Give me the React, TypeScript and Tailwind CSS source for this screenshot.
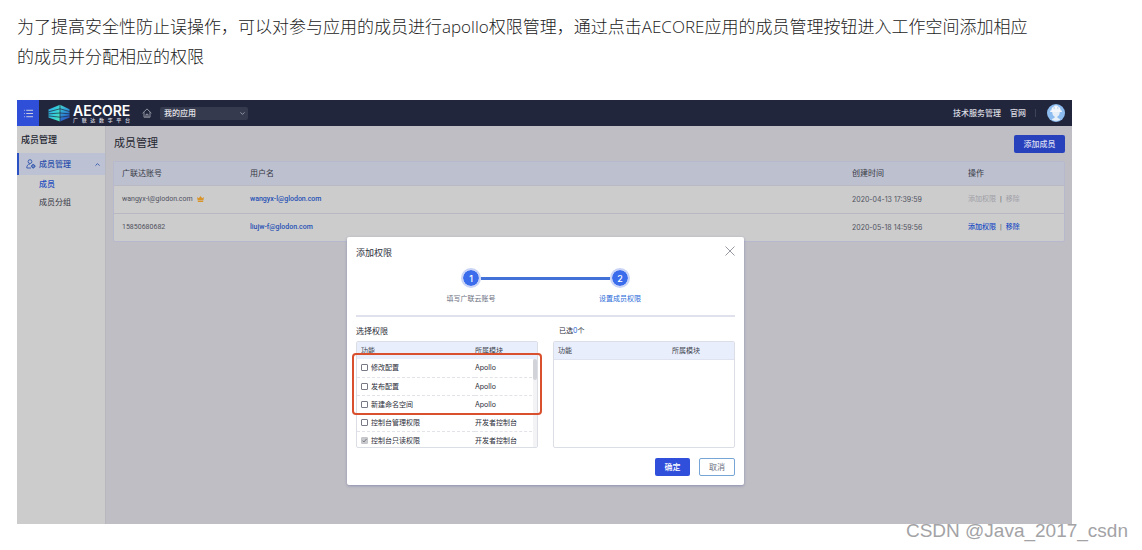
import React from "react";
import { ChevronDown, ChevronUp, List } from "lucide-react";

type Member = { account: string; name: string; created: string; owner: boolean };
type Permission = { id: string; name: string; module: string; granted: boolean };

const members: Member[] = [
  { account: "wangyx-l@glodon.com", name: "wangyx-l@glodon.com", created: "2020-04-13 17:39:59", owner: true },
  { account: "15850680682", name: "liujw-f@glodon.com", created: "2020-05-18 14:59:56", owner: false },
];

const permissions: Permission[] = [
  { id: "edit", name: "修改配置", module: "Apollo", granted: false },
  { id: "publish", name: "发布配置", module: "Apollo", granted: false },
  { id: "namespace", name: "新建命名空间", module: "Apollo", granted: false },
  { id: "console-admin", name: "控制台管理权限", module: "开发者控制台", granted: false },
  { id: "console-read", name: "控制台只读权限", module: "开发者控制台", granted: true },
];

function LogoMark() {
  return (
    <svg viewBox="0 0 22 18" className="h-[18px] w-[22px]" aria-hidden="true">
      <defs>
        <linearGradient id="mark" x1="0" y1="0" x2="1" y2="0.6">
          <stop offset="0" stopColor="#2f9fe0" />
          <stop offset="0.55" stopColor="#33c9dc" />
          <stop offset="1" stopColor="#45e0c4" />
        </linearGradient>
        <linearGradient id="side" x1="0" y1="0" x2="0.4" y2="1">
          <stop offset="0" stopColor="#46dcd2" />
          <stop offset="0.5" stopColor="#2f9bd8" />
          <stop offset="1" stopColor="#2b57c4" />
        </linearGradient>
      </defs>
      <path d="M0.5 5.6 12 0.8V17.4L0.5 13.6Z" fill="url(#mark)" />
      <path d="M12 0.8 21.5 5.2V13.4L12 17.4Z" fill="url(#side)" />
      <path
        d="M0.3 7.9 12 4.8 21.7 7.6M0.3 9.9 12 9 21.7 9.8M0.3 11.9 12 13.2 21.7 11.9M12 0.8V17.4"
        fill="none"
        stroke="#22263c"
        strokeWidth="0.7"
      />
    </svg>
  );
}

function HomeIcon() {
  return (
    <svg viewBox="0 0 10 10" className="size-[10px]" fill="none" stroke="#9da0ac" strokeWidth="0.9" aria-hidden="true">
      <path d="M0.6 5.2 5 0.9 9.4 5.2M2 4.2V9.2H8V4.2M4 9V6.3H6V9" />
    </svg>
  );
}

function Avatar() {
  return (
    <svg viewBox="0 0 18 18" className="size-[18px]" role="img" aria-label="用户">
      <circle cx="9" cy="9" r="9" fill="#8dbdf0" />
      <path d="M4.3 6.4C4.5 4 5.8 2.7 7.4 2.3V1.4H10.6V2.3C12.2 2.7 13.5 4 13.7 6.4H14.8V8H3.2V6.4Z" fill="#f3f7fb" />
      <path d="M5.2 8H12.8C12.8 10.8 11.4 12.2 10.4 12.6V13.8L13.4 15.2C11.4 17.4 6.6 17.4 4.6 15.2L7.6 13.8V12.6C6.6 12.2 5.2 10.8 5.2 8Z" fill="#e7eff8" />
      <path d="M7.2 2.8V5.2M10.8 2.8V5.2" stroke="#8dbdf0" strokeWidth="0.6" />
    </svg>
  );
}

function MemberIcon() {
  return (
    <svg viewBox="0 0 10 10" className="size-[10px]" fill="none" stroke="#3156ad" strokeWidth="0.9" aria-hidden="true">
      <circle cx="4" cy="2.6" r="1.9" />
      <path d="M5 9H0.8C0.8 6.7 1.8 5 4 5" />
      <circle cx="7.2" cy="7.2" r="1.6" fill="#3156ad" fillOpacity="0.5" />
      <path d="M7.2 4.9V5.6M7.2 8.8V9.5M4.9 7.2H5.6M8.8 7.2H9.5" />
    </svg>
  );
}

function CrownIcon() {
  return (
    <svg viewBox="0 0 7 6" className="mb-px h-[6px] w-[7px]" fill="#d99428" aria-hidden="true">
      <path d="M0 1 1.8 2.2 3.5 0 5.2 2.2 7 1 6.3 4.6H0.7ZM0.8 5H6.2V6H0.8Z" />
    </svg>
  );
}

function TopBar() {
  return (
    <header className="flex h-[26px] items-center bg-[#22263c] text-[8px] font-medium text-[#d9dae0]">
      <button aria-label="菜单" className="flex h-full w-[22px] items-center justify-center bg-[#304fd9]">
        <List className="size-[11px]" strokeWidth={2} />
      </button>
      <div className="ml-[9px] flex items-center gap-[3px]">
        <LogoMark />
        <div className="w-[57px]">
          <div className="font-[Inter] text-[14px] leading-[15px] font-semibold text-white">AECORE</div>
          <div className="flex justify-between text-[5px] leading-[5px]">
            {Array.from("广联达数字平台").map((c) => (
              <span key={c}>{c}</span>
            ))}
          </div>
        </div>
      </div>
      <a href="#home" aria-label="首页" className="ml-3">
        <HomeIcon />
      </a>
      <div className="relative ml-2">
        <select aria-label="应用" className="h-[13px] w-[88px] appearance-none rounded-xs bg-[#363a4e] pl-1 text-[8px] leading-[13px] font-medium text-[#e4e5ea]">
          <option>我的应用</option>
        </select>
        <ChevronDown className="pointer-events-none absolute top-[3px] right-[2px] size-[7px] text-[#a0a3b0]" strokeWidth={3} />
      </div>
      <nav className="ml-auto flex items-center gap-[9px]">
        <a href="#service">技术服务管理</a>
        <a href="#site">官网</a>
        <span className="h-2 w-px bg-[#3f435a]" />
      </nav>
      <div className="mr-[7px] ml-[11px]">
        <Avatar />
      </div>
    </header>
  );
}

function Sidebar() {
  return (
    <aside className="w-[89px] shrink-0 border-r border-[#b7b7c0] bg-[#cccccd] text-[8px]">
      <h2 className="flex h-[27px] items-center pl-1 text-[9px] font-medium text-[#22242f]">成员管理</h2>
      <button className="flex h-[22px] w-full items-center border-l-2 border-[#2a50c4] bg-[#bcc2d3] pr-1 pl-[7px] font-medium text-[#2c50ab]">
        <MemberIcon />
        <span className="ml-[3px]">成员管理</span>
        <ChevronUp className="ml-auto size-[7px]" strokeWidth={3} />
      </button>
      <nav className="flex flex-col pl-[22px] leading-[18px]">
        <a href="#members" className="font-medium text-[#1f4fc0]">成员</a>
        <a href="#groups" className="text-[#33353f]">成员分组</a>
      </nav>
    </aside>
  );
}

function MemberTable() {
  return (
    <table className="w-full table-fixed border-separate border-spacing-0 overflow-hidden rounded-xs border border-[#b6b9cd] bg-[#cccccd] text-left font-['Roboto','Noto_Sans_CJK_SC',sans-serif] text-[7px] text-[#50525d]">
      <thead>
        <tr className="h-[23px] bg-[#bdc0cf] text-[8px] text-[#353844]">
          <th className="w-32 pl-2 font-normal">广联达账号</th>
          <th className="pl-2 font-normal">用户名</th>
          <th className="w-[116px] pl-2 font-normal">创建时间</th>
          <th className="w-[104px] pl-2 font-normal">操作</th>
        </tr>
      </thead>
      <tbody>
        {members.map((m) => (
          <tr key={m.account} className="h-7 *:border-t *:border-[#b9b9c3] *:pl-2">
            <td>
              <span className="flex items-center gap-1">
                {m.account}
                {m.owner && <CrownIcon />}
              </span>
            </td>
            <td className="font-medium text-[#2650b4]">{m.name}</td>
            <td className="font-[Inter]">{m.created}</td>
            <td>
              <span className={m.owner ? "flex gap-1 text-[#9fa0a6]" : "flex gap-1 font-medium text-[#1f50c4]"}>
                <button disabled={m.owner}>添加权限</button>
                <span className="font-normal text-[#50525c]">|</span>
                <button disabled={m.owner}>移除</button>
              </span>
            </td>
          </tr>
        ))}
      </tbody>
    </table>
  );
}

function Steps() {
  return (
    <div>
      <div className="flex items-center justify-center">
        <span className="flex size-5 items-center justify-center rounded-full border-2 border-[#c9d4f6] bg-[#3b6cec] bg-clip-padding text-[9px] font-medium text-white">1</span>
        <span className="h-[3px] w-[129px] bg-[#4272d8]" />
        <span className="flex size-5 items-center justify-center rounded-full border-2 border-[#c9d4f6] bg-[#3b6cec] bg-clip-padding text-[9px] font-medium text-white">2</span>
      </div>
      <div className="mx-auto grid w-[298px] grid-cols-2 text-center text-[7px] leading-[22px] text-[#6d7080]">
        <span>填写广联云账号</span>
        <span className="text-[#2a6bd8]">设置成员权限</span>
      </div>
    </div>
  );
}

function ListHead() {
  return (
    <thead>
      <tr className="h-[17px] bg-[#e9eefc] text-[#40434f]">
        <th className="w-[118px] pl-1 font-normal">功能</th>
        <th className="font-normal">所属模块</th>
      </tr>
    </thead>
  );
}

function PermissionRow({ permission }: { permission: Permission }) {
  return (
    <tr className="h-[18px] border-b border-dashed border-[#e2e3e8]">
      <td className="pl-1">
        <label className="flex items-center gap-[3px]">
          <span className="relative flex">
            <input
              type="checkbox"
              defaultChecked={permission.granted}
              disabled={permission.granted}
              className="peer size-[7px] appearance-none rounded-[1px] border border-[#777a84] bg-white disabled:border-[#c4c5ca] disabled:bg-[#c9cace]"
            />
            <svg
              viewBox="0 0 7 7"
              className="pointer-events-none absolute inset-0 hidden size-[7px] peer-checked:block"
              fill="none"
              stroke="#77787e"
              strokeWidth="1"
              aria-hidden="true"
            >
              <path d="M1.5 3.6 2.9 5 5.6 1.9" />
            </svg>
          </span>
          {permission.name}
        </label>
      </td>
      <td>{permission.module}</td>
    </tr>
  );
}

function Dialog() {
  return (
    <div role="dialog" aria-label="添加权限" className="w-[397px] rounded-xs bg-white px-[9px] pb-[9px] text-[7px] text-[#2b2d38] shadow-[0_1px_3px_#8e90b0]">
      <div className="flex h-[31px] items-center justify-between">
        <h2 className="text-[9px]">添加权限</h2>
        <button aria-label="关闭" className="pb-1">
          <svg viewBox="0 0 10 10" className="size-[10px]" stroke="#7c7f8c" strokeWidth="0.8" aria-hidden="true">
            <path d="M0.5 0.5 9.5 9.5M9.5 0.5 0.5 9.5" />
          </svg>
        </button>
      </div>
      <Steps />
      <div className="mt-[5px] border-t-2 border-[#dfe1ec]" />
      <div className="mt-1 grid grid-cols-2 gap-x-[15px]">
        <h3 className="text-[8px] leading-5">选择权限</h3>
        <h3 className="pl-[6px] text-[7px] leading-5">
          已选<span className="text-[#2a6bd8]">0</span>个
        </h3>
        <div className="relative">
          <div className="h-[107px] overflow-hidden rounded-xs border border-[#dcdee6]">
            <table className="w-full table-fixed border-collapse text-left">
              <ListHead />
              <tbody>
                {permissions.map((p) => (
                  <PermissionRow key={p.id} permission={p} />
                ))}
              </tbody>
            </table>
          </div>
          <div className="absolute top-[18px] right-px bottom-px w-1 bg-[#f3f3f5]">
            <div className="h-[21px] rounded-full bg-[#d2d3d8]" />
          </div>
          <div className="absolute -inset-x-1 top-3 h-[62px] rounded-sm border-2 border-[#d9502f]" />
        </div>
        <div className="h-[107px] overflow-hidden rounded-xs border border-[#dcdee6]">
          <table className="w-full table-fixed border-collapse border-b border-[#dfe3f0] text-left">
            <ListHead />
          </table>
        </div>
      </div>
      <div className="mt-[10px] flex justify-end gap-[9px]">
        <button className="h-[18px] w-[35px] rounded-xs bg-[#304fdb] text-[8px] font-medium text-white">确定</button>
        <button className="h-[18px] w-9 rounded-xs border border-[#76a5d6] text-[8px] text-[#6d7080]">取消</button>
      </div>
    </div>
  );
}

export default function App() {
  return (
    <div className="relative min-h-screen bg-white font-['Inter','Noto_Sans_CJK_SC',sans-serif]">
      <article className="pt-3 pr-[70px] pl-[17px]">
        <p className="font-['Open_Sans','Noto_Sans_CJK_SC',sans-serif] text-[17px] leading-[30px] font-light text-[#222]">
          为了提高安全性防止误操作，可以对参与应用的成员进行apollo权限管理，通过点击AECORE应用的成员管理按钮进入工作空间添加相应
          <br />
          的成员并分配相应的权限
        </p>
        <div className="relative mt-7 leading-none">
          <TopBar />
          <div className="flex min-h-[398px]">
            <Sidebar />
            <main className="min-w-0 flex-1 bg-[#bfbec4] px-[7px] pt-2">
              <div className="mb-2 flex h-[19px] items-center justify-between">
                <h1 className="pl-px text-[11px] text-[#23252f]">成员管理</h1>
                <button className="h-[18px] w-[51px] rounded-xs bg-[#2741bd] text-[8px] font-medium text-[#d8dcf0]">添加成员</button>
              </div>
              <MemberTable />
            </main>
          </div>
          <div className="absolute inset-0 flex items-start justify-center pt-[137px] pl-[2px]">
            <Dialog />
          </div>
        </div>
      </article>
      <div className="absolute right-[14px] bottom-[7px] font-['Liberation_Sans',sans-serif] text-[19px] leading-6 text-[#a3a3a6]">
        CSDN @Java_2017_csdn
      </div>
    </div>
  );
}
